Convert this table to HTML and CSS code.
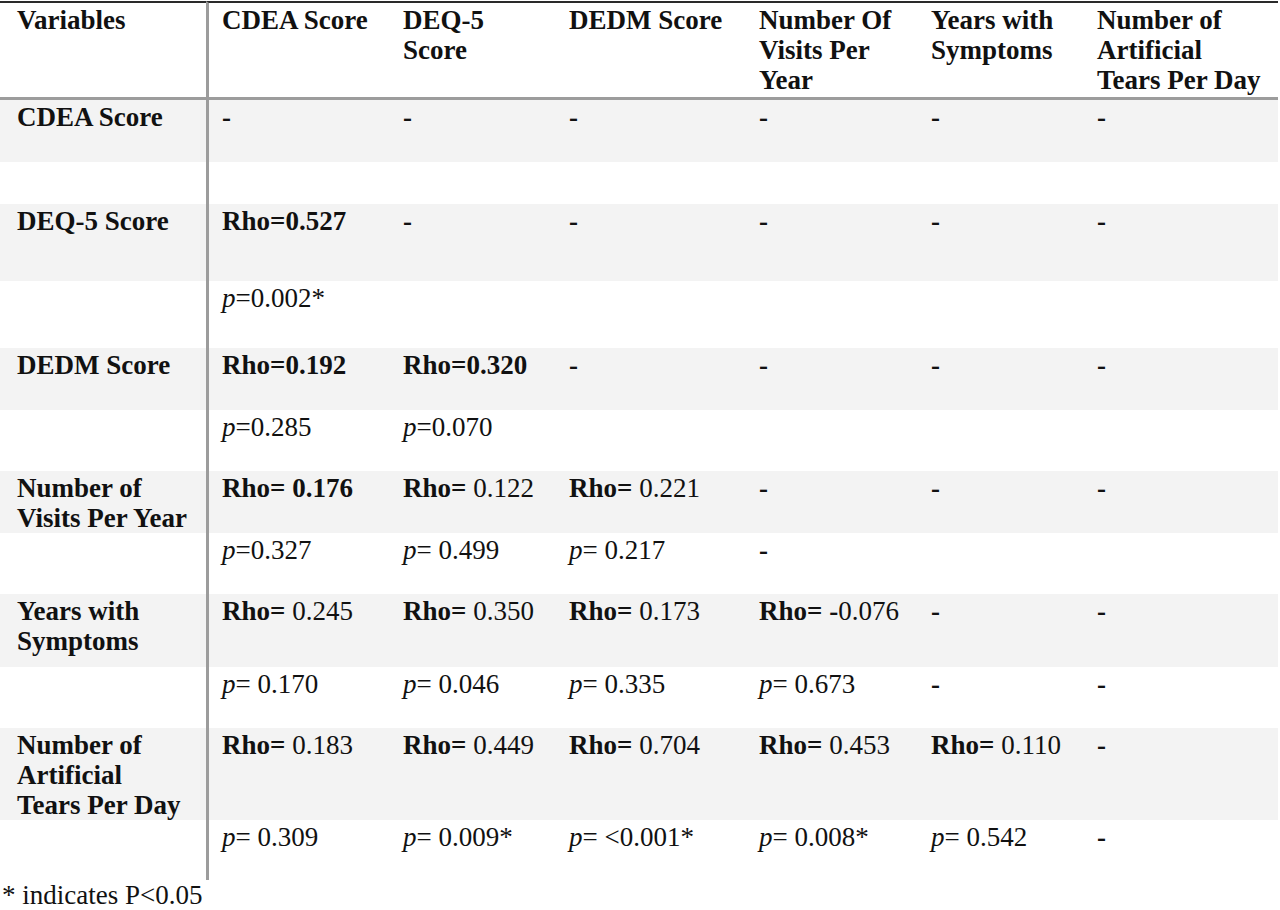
FILE: index.html
```html
<!DOCTYPE html>
<html lang="en">
<head>
<meta charset="utf-8">
<title>Correlation table</title>
<link rel="stylesheet" href="styles.css">
</head>
<body>
<table class="corr">
  <colgroup>
    <col class="c1"><col class="c2"><col class="c3"><col class="c4"><col class="c5"><col class="c6"><col class="c7">
  </colgroup>
  <thead>
    <tr class="head">
      <th>Variables</th>
      <th class="vl">CDEA Score</th>
      <th>DEQ-5<br>Score</th>
      <th>DEDM Score</th>
      <th>Number Of<br>Visits Per<br>Year</th>
      <th>Years with<br>Symptoms</th>
      <th>Number of<br>Artificial<br>Tears Per Day</th>
    </tr>
  </thead>
  <tbody>
    <tr class="g r62">
      <th>CDEA Score</th>
      <td class="vl"><b>-</b></td><td><b>-</b></td><td><b>-</b></td><td><b>-</b></td><td><b>-</b></td><td><b>-</b></td>
    </tr>
    <tr class="r42">
      <th></th><td class="vl"></td><td></td><td></td><td></td><td></td><td></td>
    </tr>
    <tr class="g r77">
      <th>DEQ-5 Score</th>
      <td class="vl"><b>Rho=0.527</b></td><td><b>-</b></td><td><b>-</b></td><td><b>-</b></td><td><b>-</b></td><td><b>-</b></td>
    </tr>
    <tr class="r67">
      <th></th><td class="vl"><i>p</i>=0.002*</td><td></td><td></td><td></td><td></td><td></td>
    </tr>
    <tr class="g r62">
      <th>DEDM Score</th>
      <td class="vl"><b>Rho=0.192</b></td><td><b>Rho=0.320</b></td><td><b>-</b></td><td><b>-</b></td><td><b>-</b></td><td><b>-</b></td>
    </tr>
    <tr class="r61">
      <th></th><td class="vl"><i>p</i>=0.285</td><td><i>p</i>=0.070</td><td></td><td></td><td></td><td></td>
    </tr>
    <tr class="g r62">
      <th>Number of<br>Visits Per Year</th>
      <td class="vl"><b>Rho= 0.176</b></td><td><b>Rho=</b> 0.122</td><td><b>Rho=</b> 0.221</td><td><b>-</b></td><td><b>-</b></td><td><b>-</b></td>
    </tr>
    <tr class="r61">
      <th></th><td class="vl"><i>p</i>=0.327</td><td><i>p</i>= 0.499</td><td><i>p</i>= 0.217</td><td><b>-</b></td><td></td><td></td>
    </tr>
    <tr class="g r73">
      <th>Years with<br>Symptoms</th>
      <td class="vl"><b>Rho=</b> 0.245</td><td><b>Rho=</b> 0.350</td><td><b>Rho=</b> 0.173</td><td><b>Rho= -</b>0.076</td><td><b>-</b></td><td><b>-</b></td>
    </tr>
    <tr class="r61">
      <th></th><td class="vl"><i>p</i>= 0.170</td><td><i>p</i>= 0.046</td><td><i>p</i>= 0.335</td><td><i>p</i>= 0.673</td><td><b>-</b></td><td><b>-</b></td>
    </tr>
    <tr class="g r92">
      <th>Number of<br>Artificial<br>Tears Per Day</th>
      <td class="vl"><b>Rho=</b> 0.183</td><td><b>Rho=</b> 0.449</td><td><b>Rho=</b> 0.704</td><td><b>Rho=</b> 0.453</td><td><b>Rho=</b> 0.110</td><td><b>-</b></td>
    </tr>
    <tr class="r60">
      <th></th><td class="vl"><i>p</i>= 0.309</td><td><i>p</i>= 0.009*</td><td><i>p</i>= &lt;0.001*</td><td><i>p</i>= 0.008*</td><td><i>p</i>= 0.542</td><td><b>-</b></td>
    </tr>
  </tbody>
</table>
<p class="note">* indicates P&lt;0.05</p>
</body>
</html>
```
FILE: styles.css
```css
html, body {
  margin: 0;
  padding: 0;
  background: #fff;
}

body {
  font-family: "Liberation Serif", "Times New Roman", serif;
  font-size: 27px;
  line-height: 30px;
  color: #111;
}

.corr {
  margin-top: 1px;
  width: 1278px;
  table-layout: fixed;
  border-collapse: separate;
  border-spacing: 0;
}

.c1 { width: 206px; }
.c2 { width: 184px; }
.c3 { width: 166px; }
.c4 { width: 190px; }
.c5 { width: 172px; }
.c6 { width: 166px; }
.c7 { width: 194px; }

.corr th,
.corr td {
  text-align: left;
  vertical-align: top;
  padding: 2px 8px 0 13px;
  white-space: nowrap;
}

.corr th {
  font-weight: bold;
}

.corr td {
  font-weight: normal;
}

.corr tr > :first-child {
  padding-left: 17px;
}

.corr .vl {
  border-left: 3px solid #9c9c9c;
}

.head {
  height: 99px;
}

.head th {
  border-top: 2px solid #2a2a2a;
  border-bottom: 3px solid #9c9c9c;
}

.g > th,
.g > td {
  background: #f3f3f3;
}

.r42 { height: 42px; }
.r60 { height: 60px; }
.r61 { height: 61px; }
.r62 { height: 62px; }
.r67 { height: 67px; }
.r73 { height: 73px; }
.r77 { height: 77px; }
.r92 { height: 92px; }

.note {
  margin: 0;
  padding: 1px 0 0 2px;
  font-size: 27px;
  line-height: 28px;
}
```
